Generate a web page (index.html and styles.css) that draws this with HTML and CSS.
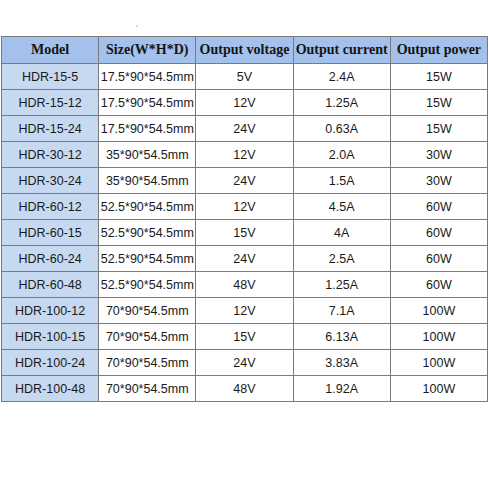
FILE: index.html
```html
<!DOCTYPE html>
<html>
<head>
<meta charset="utf-8">
<link rel="stylesheet" href="styles.css">
</head>
<body>
<div class="page">
  <div class="top"><span class="dot"></span></div>
  <table class="spec">
    <thead>
      <tr><th>Model</th><th>Size(W*H*D)</th><th>Output voltage</th><th>Output current</th><th>Output power</th></tr>
    </thead>
    <tbody>
      <tr><td class="model">HDR-15-5</td><td>17.5*90*54.5mm</td><td>5V</td><td>2.4A</td><td>15W</td></tr>
      <tr><td class="model">HDR-15-12</td><td>17.5*90*54.5mm</td><td>12V</td><td>1.25A</td><td>15W</td></tr>
      <tr><td class="model">HDR-15-24</td><td>17.5*90*54.5mm</td><td>24V</td><td>0.63A</td><td>15W</td></tr>
      <tr><td class="model">HDR-30-12</td><td>35*90*54.5mm</td><td>12V</td><td>2.0A</td><td>30W</td></tr>
      <tr><td class="model">HDR-30-24</td><td>35*90*54.5mm</td><td>24V</td><td>1.5A</td><td>30W</td></tr>
      <tr><td class="model">HDR-60-12</td><td>52.5*90*54.5mm</td><td>12V</td><td>4.5A</td><td>60W</td></tr>
      <tr><td class="model">HDR-60-15</td><td>52.5*90*54.5mm</td><td>15V</td><td>4A</td><td>60W</td></tr>
      <tr><td class="model">HDR-60-24</td><td>52.5*90*54.5mm</td><td>24V</td><td>2.5A</td><td>60W</td></tr>
      <tr><td class="model">HDR-60-48</td><td>52.5*90*54.5mm</td><td>48V</td><td>1.25A</td><td>60W</td></tr>
      <tr><td class="model">HDR-100-12</td><td>70*90*54.5mm</td><td>12V</td><td>7.1A</td><td>100W</td></tr>
      <tr><td class="model">HDR-100-15</td><td>70*90*54.5mm</td><td>15V</td><td>6.13A</td><td>100W</td></tr>
      <tr><td class="model">HDR-100-24</td><td>70*90*54.5mm</td><td>24V</td><td>3.83A</td><td>100W</td></tr>
      <tr><td class="model">HDR-100-48</td><td>70*90*54.5mm</td><td>48V</td><td>1.92A</td><td>100W</td></tr>
    </tbody>
  </table>
</div>
</body>
</html>
```

FILE: styles.css
```css
html, body {
  margin: 0;
  padding: 0;
  background: #ffffff;
}
.page {
  width: 488px;
  height: 488px;
  overflow: hidden;
}
.top {
  height: 36px;
  box-sizing: border-box;
  padding-top: 25px;
  padding-left: 136px;
}
.dot {
  display: block;
  width: 2px;
  height: 2px;
  border-radius: 50%;
  background: #c8c8c8;
}
.spec {
  border-collapse: collapse;
  table-layout: fixed;
  width: 487px;
  margin-left: 1px;
}
.spec th, .spec td {
  border: 1px solid #7a7a7a;
  text-align: center;
  padding: 0;
  white-space: nowrap;
  overflow: hidden;
}
.spec th {
  height: 26px;
  background: #a3c1ea;
  font-family: "Liberation Serif", "Times New Roman", serif;
  font-weight: bold;
  font-size: 14px;
  color: #141414;
}
.spec td {
  height: 25px;
  font-family: "Liberation Sans", Arial, sans-serif;
  font-size: 12.5px;
  color: #1a1a1a;
}
.spec td.model {
  background: #c6d9f1;
}
```
